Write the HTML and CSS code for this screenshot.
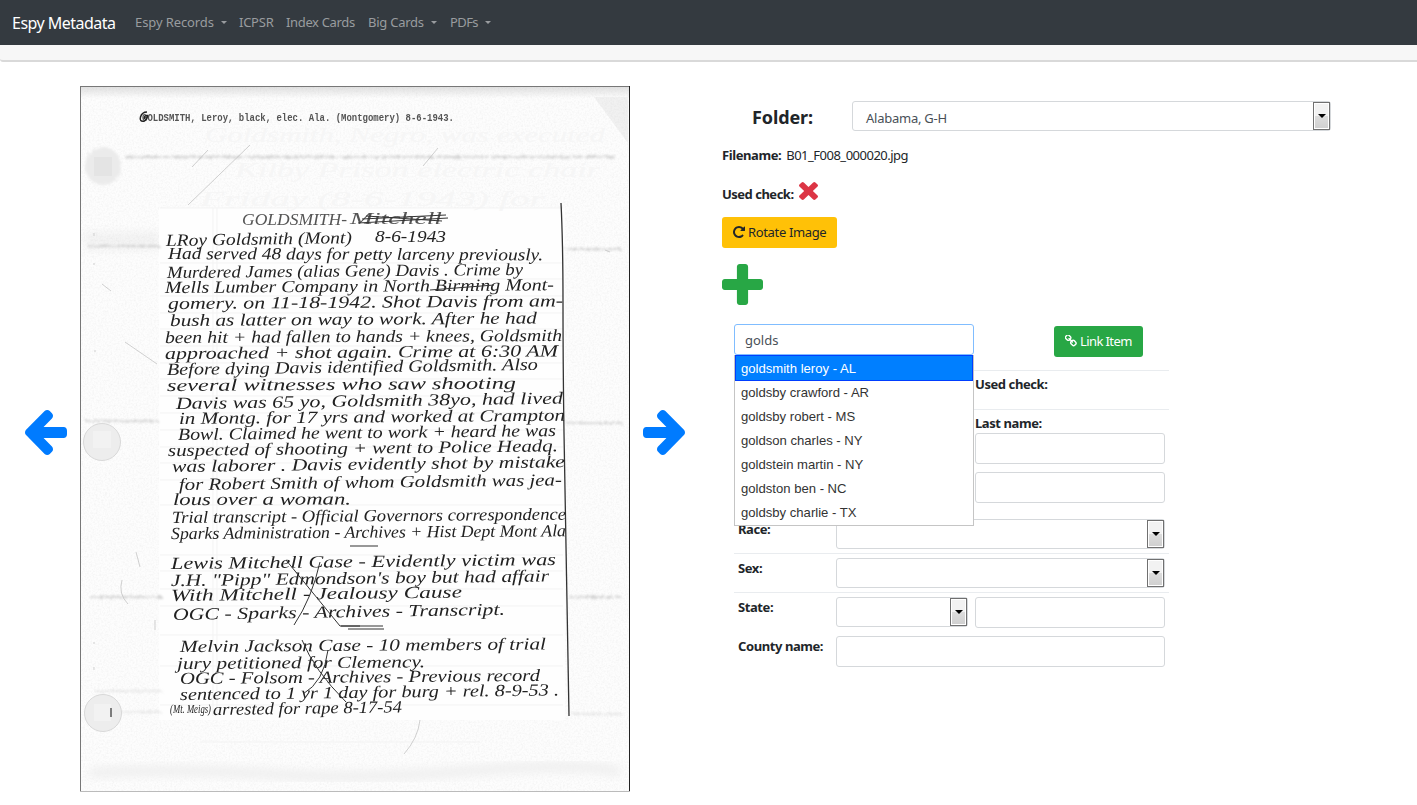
FILE: index.html
```html
<!DOCTYPE html>
<html lang="en">
<head>
<meta charset="utf-8">
<title>Espy Metadata</title>
<link rel="stylesheet" href="styles.css">
</head>
<body>
<nav class="navbar">
  <span class="brand">Espy Metadata</span>
  <span class="nav-link w-records">Espy Records<i class="caret"></i></span>
  <span class="nav-link w-icpsr">ICPSR</span>
  <span class="nav-link w-index">Index Cards</span>
  <span class="nav-link w-big">Big Cards<i class="caret"></i></span>
  <span class="nav-link w-pdfs">PDFs<i class="caret"></i></span>
</nav>
<div class="strip"></div>
<main class="content">
  <div class="pager prev"><svg class="arrow" viewBox="192 181 1472 1558" preserveAspectRatio="none"><path d="M1664 896v128q0 53-32.5 90.5t-84.5 37.5h-704l293 294q38 36 38 90t-38 90l-75 76q-37 37-90 37-52 0-91-37l-651-652q-37-37-37-90 0-52 37-91l651-650q38-38 91-38 52 0 90 38l75 74q38 38 38 91t-38 91l-293 293h704q52 0 84.5 37.5t32.5 90.5z"/></svg></div>
  <svg class="scan" viewBox="80 86 550 706">
    <defs>
      <filter id="grain" x="0" y="0" width="100%" height="100%">
        <feTurbulence type="fractalNoise" baseFrequency="0.55" numOctaves="3" seed="4"/>
        <feColorMatrix values="0 0 0 0 0.35  0 0 0 0 0.35  0 0 0 0 0.35  0.5 0 0 0 -0.19"/>
      </filter>
      <filter id="crease" x="-5%" y="-200%" width="110%" height="500%">
        <feTurbulence type="fractalNoise" baseFrequency="0.4" numOctaves="2" seed="9" result="n"/>
        <feDisplacementMap in="SourceGraphic" in2="n" scale="5"/>
        <feGaussianBlur stdDeviation="0.9"/>
      </filter>
      <filter id="soft" x="-20%" y="-50%" width="140%" height="200%"><feGaussianBlur stdDeviation="5"/></filter>
      <linearGradient id="topShade" x1="0" y1="0" x2="0" y2="1"><stop offset="0" stop-color="#dedede"/><stop offset="1" stop-color="#fcfcfc"/></linearGradient>
    </defs>
    <rect x="80" y="86" width="550" height="706" fill="#fdfdfd"/>
    <rect x="80" y="86" width="550" height="12" fill="url(#topShade)"/>
    <path d="M594 97l34 46v-46z" fill="#f1f1f1"/>
    <rect x="85" y="232" width="75" height="18" fill="#f3f3f3" filter="url(#soft)"/>
    <rect x="80" y="86" width="550" height="706" filter="url(#grain)" opacity=".38"/>
    <rect x="159" y="208" width="406" height="512" fill="#fefefe"/>
    <g class="ghost">
      <text x="205" y="142" textLength="400" lengthAdjust="spacingAndGlyphs">Goldsmith, Negro, was executed</text>
      <text x="235" y="177" textLength="365" lengthAdjust="spacingAndGlyphs">Kilby Prison electric chair</text>
      <text x="200" y="206" textLength="345" lengthAdjust="spacingAndGlyphs">Friday (8-6-1943) for</text>
    </g>
    <g class="rules"><path d="M160 208h403M160 263h403M160 279h403M160 296h403M160 313h403M160 329h403M160 346h403M160 363h403M160 379h403M160 396h403M160 413h403M160 430h403M160 447h403M160 463h403M160 480h403M160 505h403M160 555h403M160 571h403M160 589h403M160 606h403M160 635h403M160 666h403M160 705h403M200 742h280M213 208v508M217 208v508"/></g>
    <g class="creases" filter="url(#crease)"><path d="M125 157h490M88 246h72M565 249h56M86 421h73M566 423h56M90 597h72M569 597h52"/><path opacity=".5" d="M94 691h68M572 714h50M90 712h72"/></g>
    <path class="smudge" filter="url(#soft)" d="M90 773q90-5 180 1t200-3t150 1"/>
    <g class="scratches"><path d="M250 145l-62 60M208 150l-16 17M438 148l-15 18M420 720q-2 18-16 34M125 342l32 22M102 284l9 7M122 580q-4 14 6 24M136 552l4 15M155 620v10M94 233v3M94 263v2M95 350v2M94 642v2M94 667v3M605 250l5 2"/></g>
    <ellipse cx="103" cy="166" rx="18" ry="19" fill="#ebebeb" filter="url(#crease)"/><rect x="94" y="157" width="18" height="19" fill="#e4e4e4"/>
    <g class="holes"><circle cx="102" cy="442" r="18.500"/><circle cx="103" cy="713" r="18.500"/></g>
    <g fill="#f2f2f2"><rect x="93" y="431" width="18" height="17"/><rect x="94" y="704" width="17" height="17"/></g>
    <path d="M111 708v9" stroke="#555" stroke-width="1.500"/>
    <path d="M80.500 86V792M80 86.500H630" stroke="#777"/><path d="M629.500 86V792" stroke="#222"/><path d="M80 791.500H630" stroke="#bbb"/>
    <path d="M561 203q2 40 2 100t1 130q2 130 5 283" fill="none" stroke="#333" stroke-width="1.300"/>
    <text class="typed" x="142" y="121" textLength="312" lengthAdjust="spacingAndGlyphs">GOLDSMITH, Leroy, black, elec. Ala. (Montgomery) 8-6-1943.</text>
    <path d="M147 112q-5 0-6.500 5t4 4q3-2 3-5.500q-4 0-3 3.500" fill="none" stroke="#222" stroke-width="1.500"/>
    <g class="hand">
      <g class="title"><text x="242" y="225" textLength="105" lengthAdjust="spacingAndGlyphs">GOLDSMITH-</text><text x="350" y="224" textLength="92" lengthAdjust="spacingAndGlyphs">Mitchell</text></g>
      <text transform="translate(166 246) rotate(-.9)" textLength="186" lengthAdjust="spacingAndGlyphs">LRoy Goldsmith (Mont)</text>
      <text x="375" y="242" textLength="71" lengthAdjust="spacingAndGlyphs">8-6-1943</text>
      <text transform="translate(168 259) rotate(.2)" textLength="375" lengthAdjust="spacingAndGlyphs">Had served 48 days for petty larceny previously.</text>
      <text transform="translate(167 278) rotate(-.5)" textLength="356" lengthAdjust="spacingAndGlyphs">Murdered James (alias Gene) Davis .  Crime by</text>
      <text transform="translate(165 293) rotate(-.4)" textLength="389" lengthAdjust="spacingAndGlyphs">Mells Lumber Company in North Birming Mont-</text>
      <text transform="translate(168 309) rotate(-.4)" textLength="395" lengthAdjust="spacingAndGlyphs">gomery. on 11-18-1942. Shot Davis from am-</text>
      <text transform="translate(170 326) rotate(-.4)" textLength="367" lengthAdjust="spacingAndGlyphs">bush as latter on way to work. After he had</text>
      <text transform="translate(165 343) rotate(-.3)" textLength="397" lengthAdjust="spacingAndGlyphs">been hit + had fallen to hands + knees, Goldsmith</text>
      <text transform="translate(165 359) rotate(-.4)" textLength="393" lengthAdjust="spacingAndGlyphs">approached + shot again. Crime at 6:30 AM</text>
      <text transform="translate(167 375) rotate(-.8)" textLength="371" lengthAdjust="spacingAndGlyphs">Before dying Davis identified Goldsmith. Also</text>
      <text transform="translate(167 391) rotate(-.4)" textLength="349" lengthAdjust="spacingAndGlyphs">several witnesses who saw shooting</text>
      <text transform="translate(176 409) rotate(-.8)" textLength="387" lengthAdjust="spacingAndGlyphs">Davis was 65 yo, Goldsmith 38yo, had lived</text>
      <text transform="translate(179 424) rotate(-.5)" textLength="386" lengthAdjust="spacingAndGlyphs">in Montg. for 17 yrs and worked at Crampton</text>
      <text transform="translate(178 440) rotate(-.6)" textLength="378" lengthAdjust="spacingAndGlyphs">Bowl. Claimed he went to work + heard he was</text>
      <text transform="translate(168 456) rotate(-.7)" textLength="390" lengthAdjust="spacingAndGlyphs">suspected of shooting + went to Police Headq.</text>
      <text transform="translate(172 472) rotate(-.7)" textLength="393" lengthAdjust="spacingAndGlyphs">was laborer .  Davis evidently shot by mistake</text>
      <text transform="translate(179 490) rotate(-.7)" textLength="383" lengthAdjust="spacingAndGlyphs">for Robert Smith of whom Goldsmith was jea-</text>
      <text transform="translate(173 505) rotate(-.2)" textLength="178" lengthAdjust="spacingAndGlyphs">lous over a woman.</text>
      <text transform="translate(172 523) rotate(-.5)" textLength="394" lengthAdjust="spacingAndGlyphs">Trial transcript - Official Governors correspondence</text>
      <text transform="translate(171 539) rotate(-.4)" textLength="395" lengthAdjust="spacingAndGlyphs">Sparks Administration - Archives + Hist Dept Mont Ala</text>
      <text transform="translate(171 569) rotate(-.6)" textLength="385" lengthAdjust="spacingAndGlyphs">Lewis Mitchell Case - Evidently victim was</text>
      <text transform="translate(171 586) rotate(-.7)" textLength="378" lengthAdjust="spacingAndGlyphs">J.H. "Pipp" Edmondson's boy but had affair</text>
      <text transform="translate(171 601) rotate(-.7)" textLength="291" lengthAdjust="spacingAndGlyphs">With Mitchell - Jealousy Cause</text>
      <text transform="translate(173 620) rotate(-.9)" textLength="332" lengthAdjust="spacingAndGlyphs">OGC - Sparks - Archives - Transcript.</text>
      <text transform="translate(180 652) rotate(-.4)" textLength="366" lengthAdjust="spacingAndGlyphs">Melvin Jackson Case - 10 members of trial</text>
      <text transform="translate(177 669) rotate(-.4)" textLength="248" lengthAdjust="spacingAndGlyphs">jury petitioned for Clemency.</text>
      <text transform="translate(180 684) rotate(-.5)" textLength="360" lengthAdjust="spacingAndGlyphs">OGC - Folsom - Archives - Previous record</text>
      <text transform="translate(180 700) rotate(-.7)" textLength="379" lengthAdjust="spacingAndGlyphs">sentenced to 1 yr 1 day for burg + rel. 8-9-53 .</text>
      <text class="small" transform="translate(170 713)" textLength="41" lengthAdjust="spacingAndGlyphs">(Mt. Meigs)</text>
      <text transform="translate(213 715) rotate(-.8)" textLength="189" lengthAdjust="spacingAndGlyphs">arrested for rape 8-17-54</text>
    </g>
    <g class="strokes"><path d="M362 219l84-4M358 223l90-5M366 216l76 5M430 290l64-5M350 546h28M341 626h42M348 629h36M286 560l54 66h20M320 562q-8 36-26 63M302 640q12 30 44 62M328 650q-4 32-25 44"/></g>
  </svg>
  <div class="pager next"><svg class="arrow flip" viewBox="192 181 1472 1558" preserveAspectRatio="none"><path d="M1664 896v128q0 53-32.500 90.500t-84.500 37.500h-704l293 294q38 36 38 90t-38 90l-75 76q-37 37-90 37-52 0-91-37l-651-652q-37-37-37-90 0-52 37-91l651-650q38-38 91-38 52 0 90 38l75 74q38 38 38 91t-38 91l-293 293h704q52 0 84.500 37.500t32.500 90.500z"/></svg></div>
  <section class="panel">
    <div class="folder"><span class="folder-label">Folder:</span><div class="select folder-select"><span class="value">Alabama, G-H</span><i class="drop"></i></div></div>
    <div class="filename"><b>Filename:</b><span class="t-name">B01_F008_000020.jpg</span></div>
    <div class="used"><b class="t-used">Used check:</b><svg class="times" viewBox="302 366 1188 1188" preserveAspectRatio="none"><path d="M1490 1322q0 40-28 68l-136 136q-28 28-68 28t-68-28l-294-294-294 294q-28 28-68 28t-68-28l-136-136q-28-28-28-68t28-68l294-294-294-294q-28-28-28-68t28-68l136-136q28-28 68-28t68 28l294 294 294-294q28-28 68-28t68 28l136 136q28 28 28 68t-28 68l-294 294 294 294q28 28 28 68z"/></svg></div>
    <div class="btn rotate"><svg class="ico" viewBox="128 128 1536 1536"><path d="M1664 256v448q0 26-19 45t-45 19h-448q-42 0-59-40-17-39 14-69l138-138q-148-137-349-137-104 0-198.500 40.500t-163.500 109.500-109.500 163.500-40.500 198.500 40.500 198.500 109.500 163.500 163.500 109.500 198.500 40.500q119 0 225-52t179-147q7-10 23-12 15 0 25 9l137 138q9 8 9.500 20.500t-7.500 22.500q-109 132-264 204.500t-327 72.500q-156 0-298-61t-245-164-164-245-61-298 61-298 164-245 245-164 298-61q147 0 284.500 55.500t244.500 156.500l130-129q29-31 70-14 39 17 39 59z"/></svg><span>Rotate Image</span></div>
    <svg class="plus" viewBox="192 128 1408 1408"><path d="M1600 736v192q0 40-28 68t-68 28h-416v416q0 40-28 68t-68 28h-192q-40 0-68-28t-28-68v-416h-416q-40 0-68-28t-28-68v-192q0-40 28-68t68-28h416v-416q0-40 28-68t68-28h192q40 0 68 28t28 68v416h416q40 0 68 28t28 68z"/></svg>
    <div class="item">
      <div class="search-row">
        <div class="search">
          <div class="input focus">golds</div>
          <ul class="menu">
            <li class="active">goldsmith leroy - AL</li><li>goldsby crawford - AR</li><li>goldsby robert - MS</li><li>goldson charles - NY</li><li>goldstein martin - NY</li><li>goldston ben - NC</li><li>goldsby charlie - TX</li>
          </ul>
        </div>
        <div class="btn link"><svg class="ico" viewBox="128 128 1600 1600"><path d="M1520 1216q0-40-28-68l-208-208q-28-28-68-28-42 0-72 32 3 3 19 18.500t21.500 21.500 15 19 13 25.500 3.500 27.500q0 40-28 68t-68 28q-15 0-27.500-3.500t-25.500-13-19-15-21.500-21.500-18.500-19q-33 31-33 73 0 40 28 68l206 207q27 27 68 27 40 0 68-26l147-146q28-28 28-67zm-703-705q0-40-28-68l-206-207q-28-28-68-28-39 0-68 27l-147 146q-28 28-28 67 0 40 28 68l208 208q27 27 68 27 42 0 72-31-3-3-19-18.500t-21.500-21.500-15-19-13-25.500-3.500-27.500q0-40 28-68t68-28q15 0 27.500 3.500t25.500 13 19 15 21.500 21.500 18.500 19q33-31 33-73zm895 705q0 120-85 203l-147 146q-83 83-203 83-121 0-204-85l-206-207q-83-83-83-203 0-123 88-209l-88-88q-86 88-208 88-120 0-204-84l-208-208q-84-84-84-204t85-203l147-146q83-83 203-83 121 0 204 85l206 207q83 83 83 203 0 123-88 209l88 88q86-88 208-88 120 0 204 84l208 208q84 84 84 204z"/></svg><span>Link Item</span></div>
      </div>
      <div class="row line"><b class="third">Used check:</b></div>
      <div class="row line names"><div class="third"><b>Last name:</b><div class="input"></div></div></div>
      <div class="row middle"><div class="input third"></div></div>
      <div class="row"><b>Race:</b><div class="select wide"><i class="drop"></i></div></div>
      <div class="row line fields"><b>Sex:</b><div class="select wide"><i class="drop"></i></div></div>
      <div class="row line fields"><b>State:</b><div class="select"><i class="drop"></i></div><div class="input third"></div></div>
      <div class="row"><b>County name:</b><div class="input wide"></div></div>
    </div>
  </section>
</main>
</body>
</html>
```

FILE: styles.css
```css
* { box-sizing: border-box; }
body { margin: 0; background: #fff; color: #212529; font: 13px/20px "Noto Sans", "Open Sans", sans-serif; overflow: hidden; }
b { letter-spacing: -.42px; }
.navbar { height: 45px; background: #343a40; display: flex; align-items: center; padding: 0 0 2px 12px; color: #999c9f; }
.brand { width: 123px; font-size: 16px; color: #fff; letter-spacing: -.52px; padding-top: 3px; }
.nav-link { white-space: nowrap; }
.w-records { width: 104px; letter-spacing: -.1px; }
.w-icpsr { width: 47px; letter-spacing: -.25px; }
.w-index { width: 82px; letter-spacing: -.35px; }
.w-big { width: 82px; letter-spacing: -.25px; }
.w-pdfs { letter-spacing: -.6px; }
.caret { display: inline-block; margin-left: 7px; vertical-align: 3px; border: 3px solid transparent; border-top-color: currentColor; border-bottom: 0; }
.strip { height: 17px; background: #f7f7f7; border-bottom: 2px solid #d9d9d9; border-radius: 0 0 0 3px; }
.content { display: flex; height: 741px; }
.pager { display: flex; align-items: center; }
.prev { width: 80px; padding-left: 25px; }
.next { width: 92px; padding-left: 13px; }
.arrow { width: 42px; height: 45px; fill: #007bff; }
.flip { transform: scaleX(-1); }
.scan { width: 550px; height: 706px; margin-top: 24px; flex: none; }
.typed { font: bold 11px "Liberation Mono", monospace; fill: #555; }
.hand { font: italic 17px "Liberation Serif", serif; fill: #222; }
.small { font-size: 13px; }
.title { fill: #555; }
.ghost { font: italic 21px "Liberation Serif", serif; fill: #f6f6f6; }
.rules { stroke: #f3f3f3; fill: none; }
.creases { stroke: #c9c9c9; stroke-width: 1.6; fill: none; }
.smudge { stroke: #efefef; stroke-width: 10; fill: none; }
.scratches { stroke: #bbb; stroke-width: .7; fill: none; }
.holes { fill: #ededed; stroke: #d0d0d0; stroke-width: .8; }
.strokes { stroke: #333; stroke-width: 1; fill: none; }
.panel { width: 620px; padding-top: 39px; }
.folder { display: flex; height: 30px; align-items: center; padding-left: 30px; }
.folder-label { width: 100px; font-size: 18px; font-weight: 700; padding-top: 1px; letter-spacing: -.1px; }
.input, .select { height: 31px; border: 1px solid #d5d8db; border-radius: 3px; background: #fff; }
.select { height: 30px; display: flex; justify-content: flex-end; }
.folder-select { width: 479px; }
.value { flex: 1; padding: 6px 13px; color: #495057; line-height: 20px; letter-spacing: -.25px; }
.drop { width: 17px; height: 28px; border: 1px solid #707070; box-shadow: inset 0 0 0 1px #fff; background: linear-gradient(#f2f2f2 50%, #ddd 50%, #cfcfcf); display: flex; align-items: center; justify-content: center; }
.drop::after { content: ""; border: 4px solid transparent; border-top-color: #000; border-bottom: 0; }
.filename { margin-top: 14px; height: 20px; display: flex; gap: 5px; }
.t-name { letter-spacing: -.5px; }
.used { height: 22px; margin-top: 17px; display: flex; }
.t-used { padding-top: 2px; width: 77px; white-space: nowrap; letter-spacing: -.5px; }
.times { width: 19px; height: 18px; fill: #dc3545; }
.btn { display: flex; align-items: center; height: 31px; border-radius: 3px; padding: 0 0 2px 11px; white-space: nowrap; letter-spacing: -.35px; }
.ico { width: 12px; height: 12px; margin: 1px 3px 0 0; fill: currentColor; }
.rotate { width: 115px; background: #ffc107; margin-top: 13px; }
.plus { display: block; width: 41px; height: 41px; margin-top: 16px; fill: #28a745; }
.item { margin: 19px 0 0 12px; width: 435px; }
.search-row { display: flex; height: 46px; }
.search { position: relative; width: 320px; }
.focus { width: 240px; border-color: #80bdff; padding: 5px 10px; color: #495057; }
.menu { position: absolute; z-index: 2; left: 0; top: 31px; width: 240px; height: 171px; margin: 0; padding: 0; list-style: none; background: #fff; border: 1px solid #c5c5c5; border-top: 0; font: 13.1px/25px "Liberation Sans", Arial, sans-serif; color: #333; }
.menu li { padding: 0 6px; height: 24px; }
.menu .active { height: 26px; line-height: 25px; margin-bottom: -1px; background: #007fff; color: #fff; border: 1px solid #003eff; padding-left: 5px; }
.link { width: 89px; margin-top: 2px; background: #28a745; color: #fff; letter-spacing: -.6px; }
.row { display: grid; grid-template-columns: 98px 132px 7px 190px; height: 39px; padding: 5px 0 0 4px; align-items: start; }
.line { border-top: 1px solid #e9ecef; padding-top: 3px; }
.fields { padding-top: 4px; }
.third { grid-column: 4; }
.wide { grid-column: 2 / 5; }
.names { height: 58px; }
.middle { height: 47px; }
```
